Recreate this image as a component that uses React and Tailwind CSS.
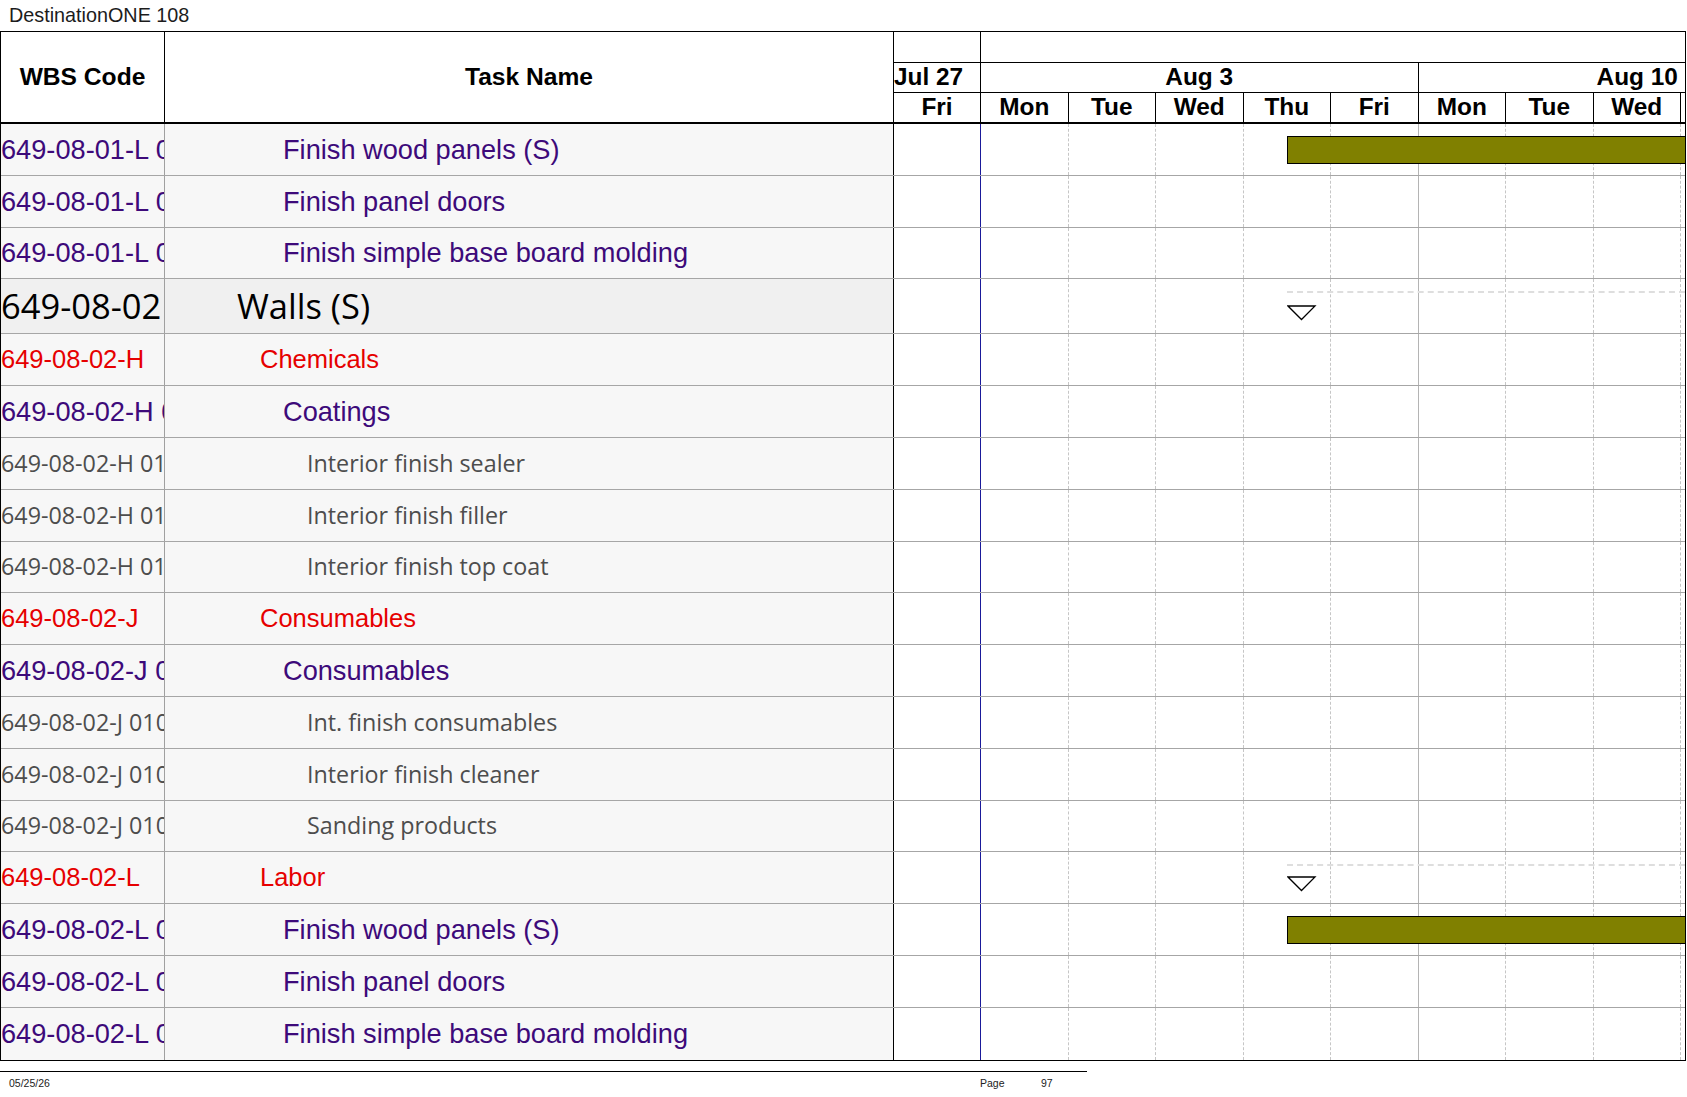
import React from "react";

const rows = [
  { kind: "task", wbs: "649-08-01-L 0101", name: "Finish wood panels (S)", bar: true },
  { kind: "task", wbs: "649-08-01-L 0102", name: "Finish panel doors" },
  { kind: "task", wbs: "649-08-01-L 0103", name: "Finish simple base board molding" },
  { kind: "walls", wbs: "649-08-02", name: "Walls (S)", summary: true },
  { kind: "group", wbs: "649-08-02-H", name: "Chemicals" },
  { kind: "task", wbs: "649-08-02-H 0101", name: "Coatings" },
  { kind: "item", wbs: "649-08-02-H 0101", name: "Interior finish sealer" },
  { kind: "item", wbs: "649-08-02-H 0102", name: "Interior finish filler" },
  { kind: "item", wbs: "649-08-02-H 0103", name: "Interior finish top coat" },
  { kind: "group", wbs: "649-08-02-J", name: "Consumables" },
  { kind: "task", wbs: "649-08-02-J 0101", name: "Consumables" },
  { kind: "item", wbs: "649-08-02-J 0101", name: "Int. finish consumables" },
  { kind: "item", wbs: "649-08-02-J 0102", name: "Interior finish cleaner" },
  { kind: "item", wbs: "649-08-02-J 0103", name: "Sanding products" },
  { kind: "group", wbs: "649-08-02-L", name: "Labor", summary: true },
  { kind: "task", wbs: "649-08-02-L 0101", name: "Finish wood panels (S)", bar: true },
  { kind: "task", wbs: "649-08-02-L 0102", name: "Finish panel doors" },
  { kind: "task", wbs: "649-08-02-L 0103", name: "Finish simple base board molding" },
];

const styles = {
  task: {
    text: "font-['Liberation_Sans',Arial,sans-serif] text-[27.2px] text-[#3d0a7a]",
    indent: "pl-[118px]",
  },
  group: {
    text: "font-['Liberation_Sans',Arial,sans-serif] text-[25.5px] text-[#e60000]",
    indent: "pl-[95px]",
  },
  item: {
    text: "font-['Open_Sans','Noto_Sans',sans-serif] text-[23.3px] text-[#4d4d4d]",
    indent: "pl-[142px]",
  },
  walls: {
    text: "font-['Open_Sans','Noto_Sans',sans-serif] text-[34.5px] text-black",
    indent: "pl-[72px]",
  },
};

const days = ["Fri", "Mon", "Tue", "Wed", "Thu", "Fri", "Mon", "Tue", "Wed", "Thu"];

const DayLines = () => (
  <>
    {days.map((d, i) => (
      <div
        key={i}
        className={
          i === 0
            ? "w-[87px] shrink-0 h-full border-r border-[#1a1a9a]"
            : i === 5
            ? "w-[87.5px] shrink-0 h-full border-r border-[#b4b4b4]"
            : "w-[87.5px] shrink-0 h-full border-r border-dashed border-[#c6c6c6]"
        }
      />
    ))}
  </>
);

const Triangle = ({ top }) => (
  <>
    <div className="absolute left-[393px] right-0 top-[12px] border-t-2 border-dashed border-[#dedede]" />
    <svg
      className={"absolute left-[393px] " + top}
      width="30"
      height="16"
      viewBox="0 0 30 16"
    >
      <polygon points="1,1 28,1 14.5,14.5" fill="white" stroke="black" strokeWidth="1.3" />
    </svg>
  </>
);

const Row = ({ row, last }) => {
  const s = styles[row.kind];
  const walls = row.kind === "walls";
  return (
    <div
      className={
        "flex " +
        (walls ? "h-[55px] " : "h-[51.8px] ") +
        (last ? "" : "border-b border-[#a6a6a6]")
      }
    >
      <div
        className={
          "w-[164px] shrink-0 border-r border-[#a0a0a0] overflow-hidden whitespace-nowrap flex items-center leading-none " +
          (walls ? "bg-[#f0f0f0] " : "bg-[#f7f7f7] ") +
          s.text
        }
      >
        {row.wbs}
      </div>
      <div
        className={
          "w-[729px] shrink-0 border-r border-black flex items-center whitespace-nowrap leading-none " +
          (walls ? "bg-[#f0f0f0] " : "bg-[#f7f7f7] ") +
          s.indent +
          " " +
          s.text
        }
      >
        {row.name}
      </div>
      <div className="flex-1 relative overflow-hidden flex bg-white">
        <DayLines />
        {row.bar && (
          <div className="absolute left-[393px] top-[11.5px] h-[28px] w-[500px] bg-[#808000] border border-black" />
        )}
        {row.summary && <Triangle top={walls ? "top-[26px]" : "top-[24px]"} />}
      </div>
    </div>
  );
};

export default function App() {
  return (
    <div className="w-[1687px] h-[1097px] bg-white overflow-hidden font-['Liberation_Sans',Arial,sans-serif]">
      <div className="h-[31px] pl-[9px] flex items-center text-[19.8px] text-[#1c1c1c] leading-none">
        DestinationONE 108
      </div>

      <div className="w-[1686px] border border-black">
        {/* header */}
        <div className="flex h-[92px] border-b-2 border-black">
          <div className="w-[164px] shrink-0 border-r border-black flex items-center justify-center text-[24.6px] font-bold text-black">
            WBS Code
          </div>
          <div className="w-[729px] shrink-0 border-r border-black flex items-center justify-center text-[24.6px] font-bold text-black">
            Task Name
          </div>
          <div className="flex-1 overflow-hidden flex flex-col text-[24.4px] font-bold text-black leading-none">
            <div className="h-[31px] flex border-b border-black">
              <div className="w-[87px] shrink-0 border-r border-black" />
              <div className="flex-1" />
            </div>
            <div className="h-[30px] flex border-b border-black">
              <div className="w-[87px] shrink-0 border-r border-black flex items-center whitespace-nowrap">
                Jul 27
              </div>
              <div className="w-[437.5px] shrink-0 border-r border-black flex items-center justify-center">
                Aug 3
              </div>
              <div className="w-[437.5px] shrink-0 flex items-center justify-center">
                Aug 10
              </div>
            </div>
            <div className="h-[29px] flex">
              {days.map((d, i) => (
                <div
                  key={i}
                  className={
                    (i === 0 ? "w-[87px]" : "w-[87.5px]") +
                    " shrink-0 border-r border-black flex items-center justify-center"
                  }
                >
                  {d}
                </div>
              ))}
            </div>
          </div>
        </div>

        {/* rows */}
        {rows.map((row, i) => (
          <Row key={i} row={row} last={i === rows.length - 1} />
        ))}
      </div>

      {/* footer */}
      <div className="mt-[10px] w-[1087px] border-t border-black h-[25px] flex items-center text-[10.5px] text-[#222] font-['Liberation_Sans_Narrow','Liberation_Sans',Arial,sans-serif]">
        <span className="w-[980px] shrink-0 pl-[9px]">05/25/26</span>
        <span className="w-[61px] shrink-0">Page</span>
        <span>97</span>
      </div>
    </div>
  );
}
